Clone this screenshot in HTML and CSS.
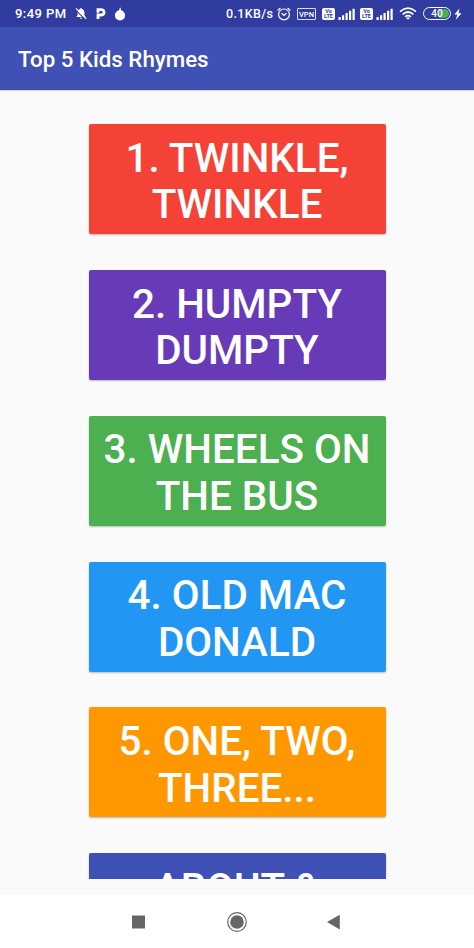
FILE: index.html
```html
<!DOCTYPE html>
<html lang="en">
  <head>
    <title>Top 5 Kids Rhymes</title>
    <meta charset="utf-8" />
    <meta name="viewport" content="width=device-width, initial-scale=1" />
    <link rel="stylesheet" href="styles.css">
  </head>
  <body>
    <div class="status">
      <span class="clock">9:49 PM</span>
      <svg class="bell" width="12" height="13" viewBox="0 0 12 13">
        <path d="M1.2 10 L2.6 8.2 V5 Q2.8 2.6 5 2 Q6 .2 7 2 Q9.2 2.6 9.4 5 V8.2 L10.8 10 Z M4.6 10.8 H7.4 Q6 13 4.6 10.8Z" fill="#fff"/>
        <path d="M.6 2.6 L10 12.4" stroke="#303c9f" stroke-width="1.2"/>
        <path d="M1 1.4 L11.2 11.8" stroke="#fff" stroke-width="1.2"/>
      </svg>
      <svg class="parking" width="10" height="13" viewBox="0 0 10 13">
        <path d="M2 12 V8 H5.4 A2.7 2.7 0 0 0 5.4 2.6 H2 V5.8" fill="none" stroke="#fff" stroke-width="2.8"/>
      </svg>
      <svg class="drop" width="12" height="14" viewBox="0 0 12 14">
        <circle cx="6" cy="8.4" r="5.1" fill="#fff"/>
        <path d="M3.8 4.2 L5.4 3 L5.7 .8 H6.7 L6.8 3 L8.4 4.2Z" fill="#fff"/>
      </svg>
      <span class="speed">0.1KB/s</span>
      <svg class="alarm" width="14" height="14" viewBox="0 0 14 14" fill="none" stroke="#fff" stroke-width="1.2">
        <circle cx="7" cy="7.4" r="5.4"/>
        <path d="M4.6 6.2 L7 8.4 L9.5 6.2 M.6 3.5 L3.4 1 M13.4 3.5 L10.6 1"/>
      </svg>
      <span class="vpn">VPN</span>
      <span class="volte"><b>Vo</b><b>LTE</b></span>
      <svg class="signal" width="17" height="12" viewBox="0 0 17 12" fill="#fff">
        <path d="M.5 9h2.2v3H.5zM4 7.2h2.2V12H4zM7.5 5h2.2v7H7.5zM11 2.8h2.2V12H11zM14.5.8h2.2V12h-2.2z"/>
      </svg>
      <span class="volte second"><b>Vo</b><b>LTE</b></span>
      <svg class="signal" width="17" height="12" viewBox="0 0 17 12" fill="#fff">
        <path d="M.5 9h2.2v3H.5zM4 7.2h2.2V12H4zM7.5 5h2.2v7H7.5zM11 2.8h2.2V12H11zM14.5.8h2.2V12h-2.2z"/>
      </svg>
      <svg class="wifi" width="18" height="13" viewBox="0 0 18 13" fill="none" stroke="#fff" stroke-width="1.7">
        <path d="M1 4.6 Q9 -2.2 17 4.6 M3.6 7.3 Q9 2.7 14.4 7.3 M6.1 9.8 Q9 7.4 11.9 9.8"/>
        <path d="M7.2 10.9 Q9 9.5 10.8 10.9 L9 12.8Z" fill="#fff" stroke="none"/>
      </svg>
      <span class="battery"><span class="level">40</span></span>
      <svg class="bolt" width="8" height="12" viewBox="0 0 8 12">
        <path d="M5.4 .4 L.4 6.6 H3.3 L1.8 11.7 L7.6 5.2 H4.6Z" fill="#fff"/>
      </svg>
    </div>
    <header>Top 5 Kids Rhymes</header>
    <main>
      <button class="red">1. Twinkle,<br>Twinkle</button>
      <button class="purple">2. Humpty<br>Dumpty</button>
      <button class="green">3. Wheels on<br>the Bus</button>
      <button class="blue">4. Old Mac<br>Donald</button>
      <button class="orange">5. One, Two,<br>Three...</button>
      <button class="indigo">About &amp;</button>
    </main>
    <nav>
      <svg width="20" height="20" viewBox="0 0 20 20">
        <path d="M2 3.5h13v13h-13z" fill="#666"/>
      </svg>
      <svg width="20" height="20" viewBox="0 0 20 20">
        <circle cx="10" cy="10" r="9.3" fill="none" stroke="#666" stroke-width="1.2"/>
        <circle cx="10" cy="10" r="6.8" fill="#666"/>
      </svg>
      <svg width="20" height="20" viewBox="0 0 20 20">
        <path d="M3 10 L15.8 2.8 V17.4Z" fill="#666"/>
      </svg>
    </nav>
  </body>
</html>
```

FILE: styles.css
```css
* {
  box-sizing: border-box;
}
body {
  display: flex;
  flex-direction: column;
  height: 948px;
  margin: 0;
  overflow: hidden;
  background-color: #fafafa;
  font-family: Roboto, "Liberation Sans", sans-serif;
}
.status {
  display: flex;
  flex: none;
  align-items: center;
  height: 27px;
  padding-left: 15px;
  background-color: #303c9f;
  color: #fff;
  font-size: 12.5px;
  font-weight: 500;
  white-space: nowrap;
}
svg {
  display: block;
  flex: none;
}
.clock {
  width: 60px;
  font-size: 13px;
  letter-spacing: 0.45px;
}
.parking {
  margin-left: 9px;
}
.drop {
  margin-left: 8px;
}
.speed {
  width: 50px;
  margin-left: 100px;
  letter-spacing: 0.35px;
}
.alarm {
  margin-left: 1px;
}
.vpn {
  width: 19px;
  height: 12px;
  margin-left: 6px;
  border: 1px solid #dde;
  border-radius: 1px;
  font-size: 7.5px;
  line-height: 11px;
  text-align: center;
}
.volte {
  width: 13px;
  height: 12px;
  margin-left: 6px;
  padding-top: 1px;
  border-radius: 2px;
  background-color: #fff;
  color: #303c9f;
  font-size: 5.5px;
  line-height: 5px;
  text-align: center;
}
.volte b {
  display: block;
}
.signal {
  margin-left: 3px;
}
.second {
  margin-left: 5px;
}
.wifi {
  margin-left: 6px;
}
.battery {
  width: 28px;
  height: 13px;
  margin-left: 6px;
  padding: 1px;
  border: 1px solid #fff;
  border-radius: 7px;
}
.level {
  display: block;
  height: 9px;
  border-radius: 5px;
  background: linear-gradient(to right, #303c9f 14px, #4caf50 14px);
  font-size: 10px;
  line-height: 9px;
  text-align: center;
}
.bolt {
  margin-left: 3px;
}
header {
  flex: none;
  height: 62.5px;
  padding-left: 18px;
  background-color: #3f51b5;
  box-shadow: 0 1px 1px rgba(0, 0, 0, 0.12);
  color: #fff;
  font-size: 22.3px;
  font-weight: 500;
  line-height: 64px;
}
main {
  display: flex;
  flex: none;
  flex-direction: column;
  align-items: center;
  gap: 35.8px;
  height: 789px;
  padding-top: 34.7px;
  overflow: hidden;
}
button {
  flex: none;
  width: 297px;
  height: 110px;
  padding: 6.5px 0 0;
  border: 0;
  border-radius: 2px;
  box-shadow: 0 1px 2px rgba(0, 0, 0, 0.25);
  color: #fff;
  font-family: inherit;
  font-size: 40.4px;
  font-weight: 500;
  line-height: 46.7px;
  text-transform: uppercase;
}
.red {
  background-color: #f44336;
}
.purple {
  background-color: #673ab7;
}
.green {
  background-color: #4caf50;
}
.blue {
  background-color: #2196f3;
}
.orange {
  background-color: #ff9800;
}
.indigo {
  padding-bottom: 44px;
  background-color: #3f51b5;
}
nav {
  display: flex;
  flex: none;
  justify-content: center;
  gap: 77px;
  height: 53px;
  margin-top: 16.5px;
  padding-top: 17px;
  background-color: #fff;
}
```
